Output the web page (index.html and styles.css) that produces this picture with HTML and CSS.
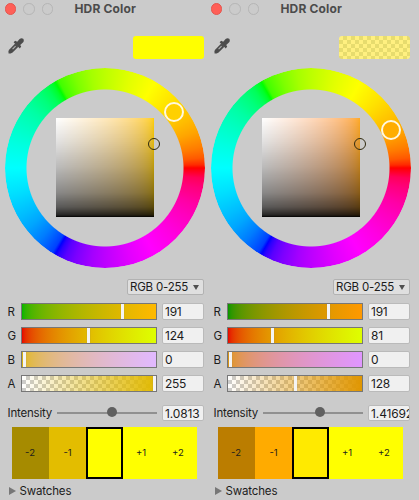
FILE: index.html
```html
<!DOCTYPE html>
<html lang="en">
<head>
<meta charset="utf-8">
<title>HDR Color</title>
<link rel="stylesheet" href="styles.css">
</head>
<body>
<svg width="0" height="0" class="defs">
  <symbol id="dropper" viewBox="0 0 16 16">
    <path d="M.6 15.400 L.4 13 L1.600 11.200 L7.200 5.600 L10.400 8.800 L4.600 14.400 L2.600 15.400Z" fill="#4c4c4c"/>
    <path d="M4.600 11.200 L7.600 8.200" stroke="#b0b0b0" stroke-width="1.200"/>
    <path d="M5.600 4.200 L7.200 2.800 L9.200 3.800 L11.600 1 Q13.500 -.4 15.200 .8 Q16.400 2.500 15.200 4.300 L12.200 6.900 L13.200 8.600 L11.800 10.400Z" fill="#4c4c4c"/>
  </symbol>
</svg>
<main class="windows">
  <section class="picker amber">
    <header class="titlebar"><i class="light close"></i><i class="light"></i><i class="light"></i><h1>HDR Color</h1></header>
    <div class="tools"><svg class="dropper"><use href="#dropper"/></svg><div class="preview"></div></div>
    <div class="wheel"><div class="ring"></div><div class="square"></div><i class="hue-knob"></i><i class="sv-knob"></i></div>
    <div class="mode"><button>RGB 0-255<i></i></button></div>
    <div class="channel"><label>R</label><div class="slider red"><i></i></div><output>191</output></div>
    <div class="channel"><label>G</label><div class="slider green"><i></i></div><output>124</output></div>
    <div class="channel"><label>B</label><div class="slider blue"><i></i></div><output>0</output></div>
    <div class="channel"><label>A</label><div class="slider alpha"><i></i></div><output>255</output></div>
    <div class="intensity"><label>Intensity</label><div class="track"><i></i></div><output>1.0813</output></div>
    <div class="exposures"><span class="m2">-2</span><span class="m1">-1</span><span class="current"></span><span>+1</span><span>+2</span></div>
    <div class="foldout"><i></i>Swatches</div>
  </section>
  <section class="picker orange">
    <header class="titlebar"><i class="light close"></i><i class="light"></i><i class="light"></i><h1>HDR Color</h1></header>
    <div class="tools"><svg class="dropper"><use href="#dropper"/></svg><div class="preview"></div></div>
    <div class="wheel"><div class="ring"></div><div class="square"></div><i class="hue-knob"></i><i class="sv-knob"></i></div>
    <div class="mode"><button>RGB 0-255<i></i></button></div>
    <div class="channel"><label>R</label><div class="slider red"><i></i></div><output>191</output></div>
    <div class="channel"><label>G</label><div class="slider green"><i></i></div><output>81</output></div>
    <div class="channel"><label>B</label><div class="slider blue"><i></i></div><output>0</output></div>
    <div class="channel"><label>A</label><div class="slider alpha"><i></i></div><output>128</output></div>
    <div class="intensity"><label>Intensity</label><div class="track"><i></i></div><output>1.41692</output></div>
    <div class="exposures"><span class="m2">-2</span><span class="m1">-1</span><span class="current"></span><span>+1</span><span>+2</span></div>
    <div class="foldout"><i></i>Swatches</div>
  </section>
</main>
</body>
</html>
```
FILE: styles.css
```css
* { box-sizing: border-box; }
body { margin: 0; background: #cbcbcb; color: #1c1c1c; font: 12px/16px Inter, sans-serif; overflow: hidden; }
.defs { position: absolute; }
.windows { display: flex; height: 500px; overflow: hidden; }
.picker { width: 206px; flex: none; }

.amber {
  --hue: #ffd000; --preview: #ffff00;
  --hue-x: 169px; --hue-y: 44.500px;
  --r0: #00b400; --r1: #ffb900; --g0: #e60000; --g1: #deff00; --solid: #e1b900; --b1: #e1b9ff;
  --r-pos: 98.500px; --g-pos: 64.500px; --a-pos: 131px; --i-pos: 55px;
  --minus2: #a68b00; --minus1: #e3bd00; --now: #ffff00;
}
.orange {
  --hue: #ffaa22; --preview: #fff080;
  --hue-x: 180.200px; --hue-y: 62px;
  --r0: #009600; --r1: #ff9900; --g0: #e60000; --g1: #deff00; --solid: #e09600; --b1: #e096ff;
  --r-pos: 98.500px; --g-pos: 42.500px; --a-pos: 66px; --i-pos: 57px;
  --minus2: #bb7d00; --minus1: #ffab00; --now: #ffea00;
}

.titlebar { height: 18px; padding: 0 0 0 4.500px; display: flex; align-items: center; gap: 7px; }
.light { width: 11.500px; height: 11.500px; border-radius: 50%; border: 1px solid #b5b5b5; }
.light.close { background: #ff5f57; border-color: #e4554e; }
h1 { margin: 0 0 0 14.500px; font-size: 12px; font-weight: 700; letter-spacing: .15px; color: #4b4b4b; }

.tools { height: 49.500px; padding: 18px 2.500px 0 8px; display: flex; justify-content: space-between; }
.dropper { width: 16px; height: 16px; margin-top: 1.500px; }
.preview { width: 70.500px; height: 22.500px; border-radius: 3px; background: var(--preview); }
.orange .preview { background: repeating-conic-gradient(#e7dc6e 0 25%, #fff080 0 50%) 0 0 / 8px 8px; }

.wheel { position: relative; width: 200px; height: 200px; margin-left: 5px; display: grid; place-items: center; }
.ring, .square { grid-area: 1 / 1; }
.ring {
  width: 200px; height: 200px; border-radius: 50%;
  background: conic-gradient(from 90deg,
    #f00 0deg, #ff0059 6deg, #ff007c 12deg, #ff00a5 22deg, #ff00bc 30deg, #ff00e1 45deg, #f0f 60deg,
    #e100ff 75deg, #bc00ff 90deg, #a500ff 98deg, #7c00ff 108deg, #5900ff 114deg, #2b00ff 118deg, #00f 120deg,
    #0040ff 122deg, #0059ff 126deg, #007cff 132deg, #00a5ff 142deg, #00bcff 150deg, #00e1ff 165deg, #0ff 180deg,
    #00ffe1 195deg, #00ffbc 210deg, #00ffa5 218deg, #00ff7c 228deg, #00ff59 234deg, #00ff2b 238deg, #0f0 240deg,
    #40ff00 242deg, #59ff00 246deg, #7cff00 252deg, #a5ff00 262deg, #bcff00 270deg, #e1ff00 285deg, #ff0 300deg,
    #ffe100 315deg, #ffbc00 330deg, #ffa500 338deg, #ff7c00 348deg, #ff5900 354deg, #ff2b00 358deg, #f00 360deg);
  -webkit-mask: radial-gradient(circle, transparent 78px, #000 79px);
  mask: radial-gradient(circle, transparent 78px, #000 79px);
}
.square {
  width: 98.500px; height: 98.500px;
  background:
    linear-gradient(transparent, rgba(0,0,0,.12) 25%, rgba(0,0,0,.27) 50%, rgba(0,0,0,.46) 75%, rgba(0,0,0,.65) 90%, rgba(0,0,0,.85) 98%, #000),
    linear-gradient(in srgb-linear to right, #fff, var(--hue));
}
.hue-knob { position: absolute; left: var(--hue-x); top: var(--hue-y); width: 20px; height: 20px; margin: -10px; border: 2px solid #fff8e0; border-radius: 50%; background: var(--hue); }
.orange .hue-knob { background: #ffad00; }
.sv-knob { position: absolute; left: 148.700px; top: 76px; width: 12px; height: 12px; margin: -6px; border: 1.500px solid #302a10; border-radius: 50%; }

.mode { height: 34.500px; padding: 11.500px 2.500px 0 0; display: flex; justify-content: flex-end; align-items: flex-start; }
.mode button { width: 76.500px; height: 16px; padding: 0 4px 0 2px; display: flex; align-items: center; justify-content: space-between; border: 1px solid #b2b2b2; border-radius: 2px; background: #dfdfdf; color: inherit; font: inherit; font-size: 11.500px; letter-spacing: -.2px; white-space: nowrap; }
.mode i { border: 3.500px solid transparent; border-top: 5px solid #505050; border-bottom: 0; }

.channel { height: 24px; padding: 1px 2.500px 0 7.500px; display: flex; align-items: flex-start; }
.channel label { width: 13.900px; padding-top: .5px; font-size: 11.500px; }
.channel output { margin-left: 5px; }
output { width: 41.500px; height: 16.500px; padding: 0 2px; border: 1px solid #bababa; border-radius: 2px; background: #f0f0f0; line-height: 15px; letter-spacing: -.3px; overflow: hidden; white-space: nowrap; }
.slider { position: relative; width: 136px; height: 16.500px; border: 1px solid #777; }
.slider i { position: absolute; top: 0; height: 14.500px; width: 3px; left: 1px; background: #f4f4f4; box-shadow: 0 0 1px #777; }
.red { background: linear-gradient(in srgb-linear to right, var(--r0), var(--r1)); }
.red i { left: var(--r-pos); }
.green { background: linear-gradient(in srgb-linear to right, var(--g0), var(--g1)); }
.green i { left: var(--g-pos); }
.blue { background: linear-gradient(in srgb-linear to right, var(--solid), var(--b1)); }
.alpha { background: linear-gradient(to right, transparent, var(--solid)), repeating-conic-gradient(#ccc 0 25%, #fff 0 50%) 0 0 / 8px 8px; }
.alpha i { left: var(--a-pos); }

.intensity { height: 28.500px; padding: 6.500px 2.500px 0 7.500px; display: flex; align-items: flex-start; }
.intensity label { width: 49.500px; padding-top: .5px; font-size: 11.500px; letter-spacing: -.2px; }
.intensity output { margin-left: 5px; letter-spacing: -.15px; }
.track { position: relative; width: 100.500px; height: 16px; background: linear-gradient(#909090, #909090) 0 7px / 100% 2px no-repeat; }
.track i { position: absolute; top: 2.500px; left: var(--i-pos); width: 10px; height: 10px; margin-left: -5px; border-radius: 50%; background: #606060; }

.exposures { height: 52px; margin-left: 12px; display: flex; font-size: 9.500px; }
.exposures span { width: 37px; padding-right: 1px; background: #ff0; display: flex; align-items: center; justify-content: center; }
.exposures .m2 { background: var(--minus2); }
.exposures .m1 { background: var(--minus1); padding: 0; }
.exposures .current { background: var(--now); border: 2px solid #000; }
.foldout { padding: 4px 0 0 9px; display: flex; align-items: center; font-size: 11.500px; letter-spacing: -.15px; }
.foldout i { margin-right: 3.500px; border: 4px solid transparent; border-left: 7px solid #777; border-right: 0; }
```
